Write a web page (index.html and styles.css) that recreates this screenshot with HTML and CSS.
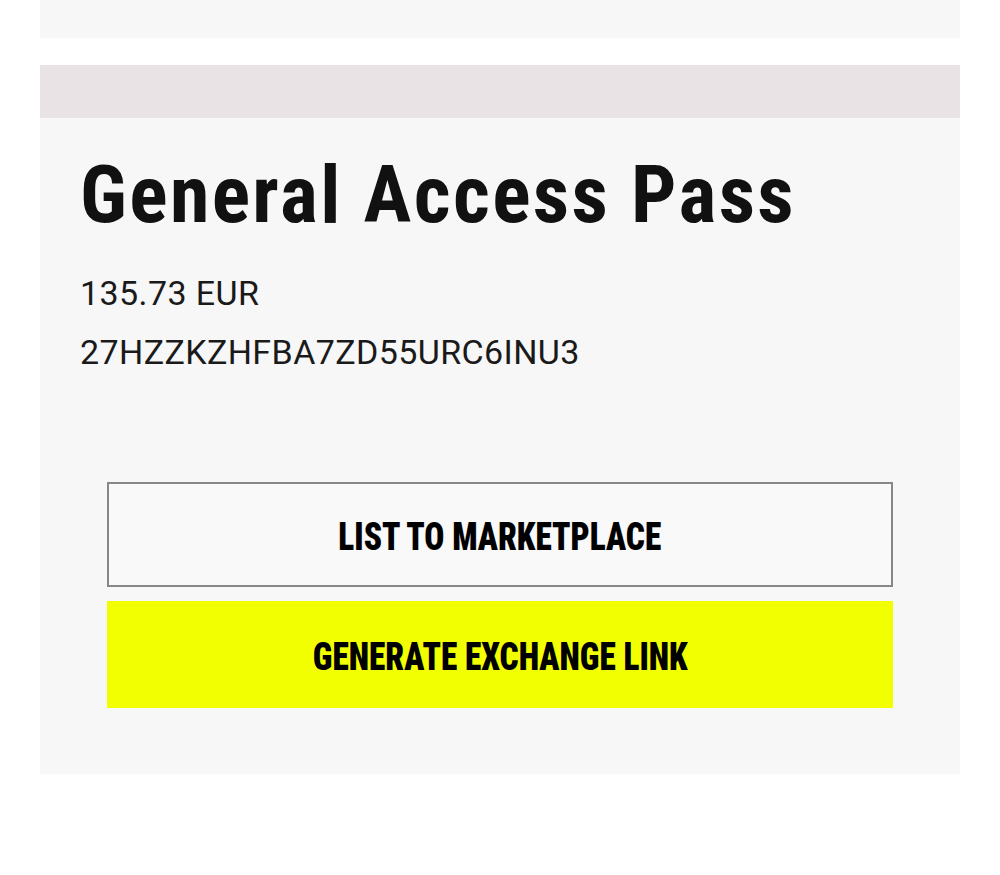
FILE: index.html
```html
<!DOCTYPE html>
<html lang="en">
<head>
	<meta charset="UTF-8">
	<title>My Tickets</title>
	<link rel="stylesheet" href="styles.css">
</head>
<body>
	<div class="page">
		<!-- previous ticket, scrolled mostly out of view -->
		<div class="card card-prev"></div>

		<div class="card pass">
			<div class="pass-band"></div>
			<div class="pass-body">
				<h1 class="pass-title">General Access Pass</h1>
				<div class="pass-meta">
					<p>135.73 EUR</p>
					<p>27HZZKZHFBA7ZD55URC6INU3</p>
				</div>
				<div class="actions">
					<button class="btn btn-outline"><span>LIST TO MARKETPLACE</span></button>
					<button class="btn btn-primary"><span>GENERATE EXCHANGE LINK</span></button>
				</div>
			</div>
		</div>
	</div>
</body>
</html>
```

FILE: styles.css
```css
*{
	margin: 0;
	padding: 0;
	box-sizing: border-box;
}
body{
	background: #fff;
	font-family: Roboto, "Liberation Sans", sans-serif;
	color: #161616;
}
.page{
	padding: 0 40px;
	display: flex;
	flex-direction: column;
	gap: 27px;
}
.card{
	background: #f7f7f7;
}
.card-prev{
	height: 38px;
}
.pass-band{
	height: 53px;
	background: #e9e3e5;
}
.pass-body{
	padding: 37px 40px 66px;
}
.pass-title{
	font-family: Roboto, sans-serif;
	font-stretch: 75%;
	font-weight: bold;
	font-size: 80px;
	line-height: 80px;
	letter-spacing: 2.4px;
	color: #111;
	margin-bottom: 29px;
	white-space: nowrap;
}
.pass-meta p{
	font-size: 34px;
	line-height: 59px;
	letter-spacing: 0.4px;
	color: #1a1a1a;
}
.actions{
	margin: 100px 27px 0;
	display: flex;
	flex-direction: column;
	gap: 14px;
}
.btn{
	display: flex;
	align-items: center;
	justify-content: center;
	width: 100%;
	border: none;
	font-family: Roboto, sans-serif;
	font-stretch: 75%;
	font-weight: 900;
	font-size: 39px;
	color: #000;
	cursor: pointer;
}
/* the label face is narrower than Roboto's narrowest width */
.btn span{
	display: inline-block;
	transform: scaleX(0.855);
	padding-top: 4px;
}
.btn-outline{
	height: 105px;
	border: 2px solid #888;
	background: #f9f9f9;
}
.btn-primary{
	height: 107px;
	background: #f2ff00;
}
```
